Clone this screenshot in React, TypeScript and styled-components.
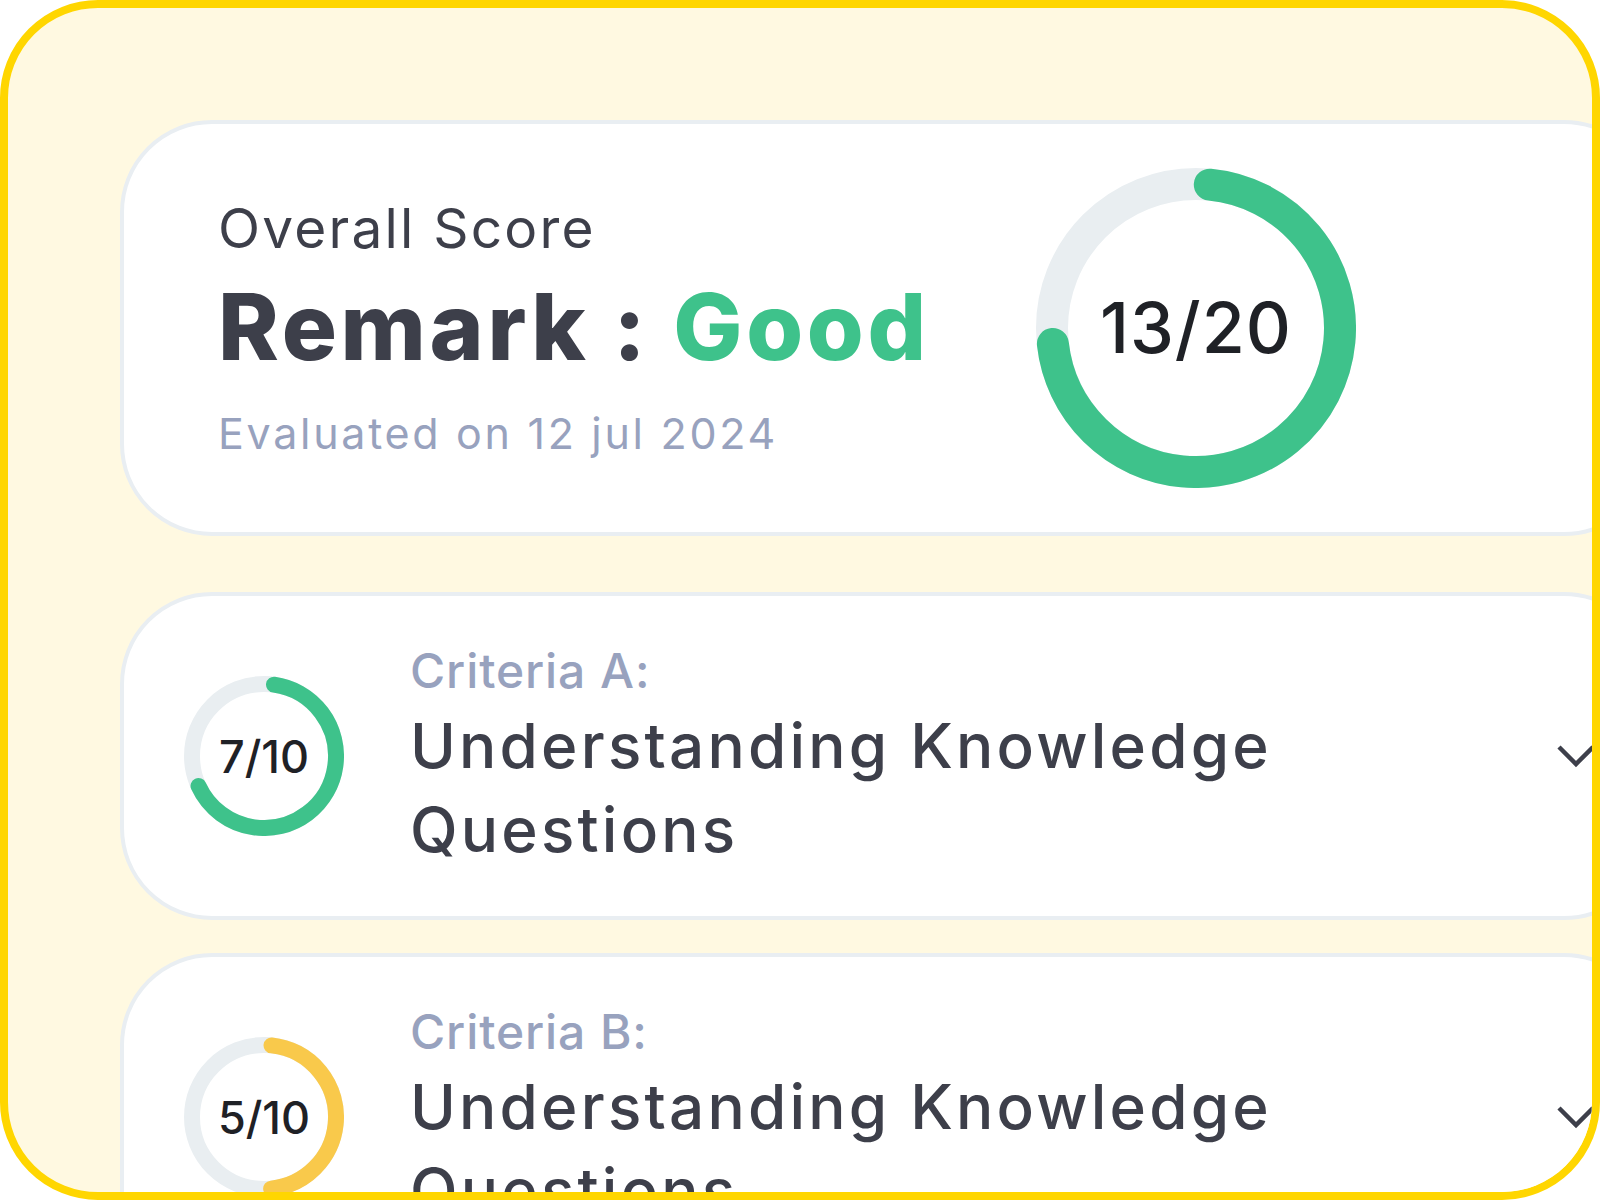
import React from "react";
import styled, { createGlobalStyle } from "styled-components";

const GlobalStyle = createGlobalStyle`
  html, body {
    margin: 0;
    padding: 0;
    background: #ffffff;
  }
  body {
    font-family: Inter, "Noto Sans", sans-serif;
  }
`;

// Styled components
const Frame = styled.div`
  width: 1600px;
  height: 1200px;
  box-sizing: border-box;
  border: 8px solid #ffd600;
  border-radius: 98px;
  background: #fff9e1;
  overflow: hidden;
  padding: 112px 0 0 112px;
  display: flex;
  flex-direction: column;
`;

const Card = styled.section<{ $height: number; $gap: number }>`
  flex-shrink: 0;
  width: 1536px;
  height: ${(p) => p.$height}px;
  margin-bottom: ${(p) => p.$gap}px;
  box-sizing: border-box;
  border: 4px solid #e9eef2;
  border-radius: 92px;
  background: #ffffff;
`;

const OverallLayout = styled.div`
  height: 100%;
  display: grid;
  grid-template-columns: 818px 320px;
  align-items: center;
  padding-left: 94px;
`;

const OverallText = styled.div`
  display: flex;
  flex-direction: column;
`;

const OverallTitle = styled.div`
  font-size: 55px;
  line-height: 55px;
  font-weight: 400;
  letter-spacing: 2.2px;
  color: #3d3f4a;
`;

const Remark = styled.div`
  margin-top: 25px;
  font-size: 92px;
  line-height: 92px;
  font-weight: 800;
  letter-spacing: 3.7px;
  color: #3d3f4a;
  white-space: nowrap;
`;

const RemarkValue = styled.span`
  color: #3ec28b;
`;

const Evaluated = styled.div`
  margin-top: 39px;
  font-size: 43px;
  line-height: 43px;
  letter-spacing: 2.7px;
  color: #98a2be;
`;

const CriteriaLayout = styled.div`
  height: 100%;
  display: grid;
  grid-template-columns: 160px 1fr 40px;
  column-gap: 66px;
  align-items: center;
  padding: 0 56px 0 60px;
`;

const CriteriaText = styled.div`
  display: flex;
  flex-direction: column;
  padding-top: 6px;
`;

const CriteriaLabel = styled.div`
  font-size: 48px;
  line-height: 48px;
  font-weight: 500;
  letter-spacing: 0.9px;
  color: #98a2be;
`;

const CriteriaTitle = styled.div`
  margin-top: 9px;
  font-size: 62px;
  line-height: 84px;
  font-weight: 500;
  letter-spacing: 3.2px;
  color: #3d3f4a;
`;

const RingBox = styled.div<{ $size: number }>`
  display: grid;
  width: ${(p) => p.$size}px;
  height: ${(p) => p.$size}px;
  & > * {
    grid-area: 1 / 1;
  }
`;

const RingLabel = styled.div<{ $fontSize: number; $spacing: number }>`
  align-self: center;
  justify-self: center;
  font-size: ${(p) => p.$fontSize}px;
  letter-spacing: ${(p) => p.$spacing}px;
  line-height: 1;
  font-weight: 500;
  color: #1f2126;
`;

const Chevron = styled.svg`
  width: 40px;
  height: 24px;
  color: #3d3f4a;
`;

interface RingProps {
  size: number;
  stroke: number;
  start: number;
  sweep: number;
  color: string;
  label: string;
  fontSize: number;
  spacing?: number;
}

const Ring: React.FC<RingProps> = ({
  size,
  stroke,
  start,
  sweep,
  color,
  label,
  fontSize,
  spacing = 0,
}) => {
  const c = size / 2;
  const r = (size - stroke) / 2;
  const circ = 2 * Math.PI * r;
  const dash = (sweep / 360) * circ;

  return (
    <RingBox $size={size}>
      <svg width={size} height={size} viewBox={`0 0 ${size} ${size}`}>
        <circle cx={c} cy={c} r={r} fill="none" stroke="#e9eef1" strokeWidth={stroke} />
        <circle
          cx={c}
          cy={c}
          r={r}
          fill="none"
          stroke={color}
          strokeWidth={stroke}
          strokeLinecap="round"
          strokeDasharray={`${dash} ${circ}`}
          transform={`rotate(${start - 90} ${c} ${c})`}
        />
      </svg>
      <RingLabel $fontSize={fontSize} $spacing={spacing}>
        {label}
      </RingLabel>
    </RingBox>
  );
};

const ChevronDown = () => (
  <Chevron viewBox="0 0 40 24" fill="none">
    <polyline
      points="3,3 20,20 37,3"
      stroke="currentColor"
      strokeWidth="4.5"
      strokeLinejoin="miter"
    />
  </Chevron>
);

interface Criterion {
  id: string;
  label: string;
  title: string;
  score: string;
  start: number;
  sweep: number;
  color: string;
}

const criteria: Criterion[] = [
  {
    id: "a",
    label: "Criteria A:",
    title: "Understanding Knowledge Questions",
    score: "7/10",
    start: 8,
    sweep: 237,
    color: "#3ec28b",
  },
  {
    id: "b",
    label: "Criteria B:",
    title: "Understanding Knowledge Questions",
    score: "5/10",
    start: 6,
    sweep: 168,
    color: "#f9c94b",
  },
];

export default function App() {
  return (
    <>
      <GlobalStyle />
      <Frame>
        <Card $height={416} $gap={56}>
          <OverallLayout>
            <OverallText>
              <OverallTitle>Overall Score</OverallTitle>
              <Remark>
                Remark : <RemarkValue>Good</RemarkValue>
              </Remark>
              <Evaluated>Evaluated on 12 jul 2024</Evaluated>
            </OverallText>
            <Ring
              size={320}
              stroke={32}
              start={5.5}
              sweep={258}
              color="#3ec28b"
              label="13/20"
              fontSize={70}
              spacing={1}
            />
          </OverallLayout>
        </Card>
        {criteria.map((c) => (
          <Card key={c.id} $height={328} $gap={33}>
            <CriteriaLayout>
              <Ring
                size={160}
                stroke={16}
                start={c.start}
                sweep={c.sweep}
                color={c.color}
                label={c.score}
                fontSize={45}
              />
              <CriteriaText>
                <CriteriaLabel>{c.label}</CriteriaLabel>
                <CriteriaTitle>{c.title}</CriteriaTitle>
              </CriteriaText>
              <ChevronDown />
            </CriteriaLayout>
          </Card>
        ))}
      </Frame>
    </>
  );
}
